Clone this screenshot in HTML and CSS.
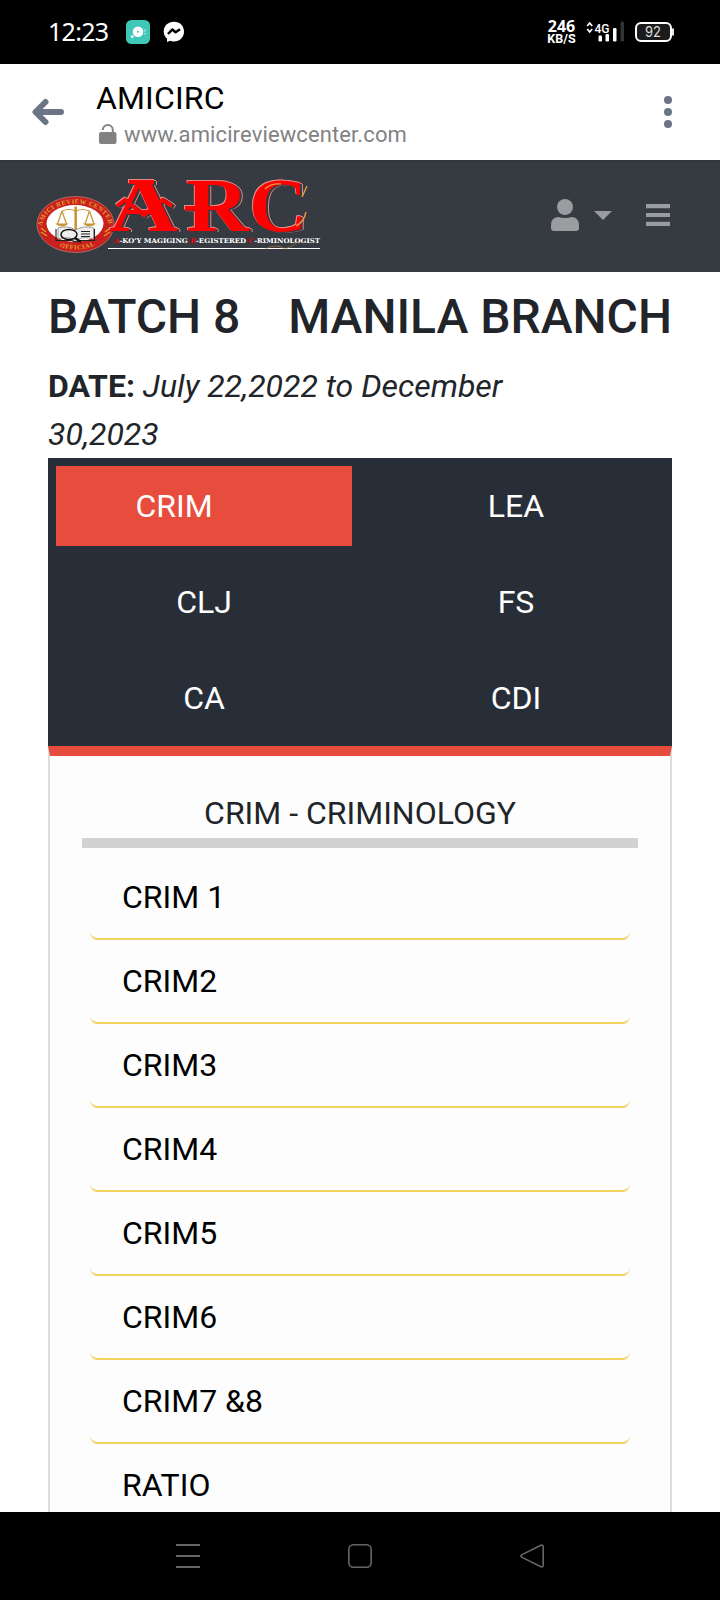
FILE: index.html
```html
<!DOCTYPE html>
<html lang="en">
<head>
<meta charset="utf-8">
<title>AMICIRC</title>
<link rel="stylesheet" href="styles.css">
</head>
<body>
<div class="screen">
  <header class="status">
    <span class="clock">12:23</span>
    <svg class="app-icon" width="24" height="24" viewBox="0 0 24 24"><rect width="24" height="24" rx="5.5" fill="#3fc8b8"/><circle cx="12" cy="11.7" r="5.3" fill="#fff"/><circle cx="12" cy="11.7" r="1" fill="#3fc8b8"/><circle cx="6.3" cy="16.7" r="1.4" fill="#fff"/><path d="M19 9.5v2M19 13v1.5" stroke="#b5ebe3" stroke-width="1.4"/></svg>
    <svg class="messenger" width="22" height="22" viewBox="0 0 22 22"><path d="M11 .7C4.900.7.7 5 .7 10.500c0 3 1.300 5.400 3.300 7.100V21l3-1.200c1.200.4 2.600.6 4 .6 6 0 10-4.300 10-9.900S17 .7 11 .7z" fill="#fff"/><path d="M5 13l4.300-4.500 3.300 2.800L17 8.300" fill="none" stroke="#000" stroke-width="2.500" stroke-linejoin="round"/></svg>
    <span class="speed"><b>246</b><small>KB/S</small></span>
    <svg class="signal" width="40" height="22" viewBox="0 0 40 22"><path d="M1.200 5l2.500-3 2.500 3M1.200 8l2.500 3 2.500-3" fill="none" stroke="#fff" stroke-width="1.700"/><text class="net" x="8.500" y="11.500" textLength="15" lengthAdjust="spacingAndGlyphs">4G</text><rect x="12.500" y="14.500" width="3.500" height="6" rx="1.200" fill="#fff"/><rect x="19.500" y="13" width="3.500" height="7.500" rx="1.200" fill="#fff"/><rect x="27" y="7" width="3.500" height="13.500" rx="1.200" fill="#fff"/><rect x="34.500" y=".5" width="3.500" height="20" rx="1.200" fill="#333"/></svg>
    <svg class="battery" width="40" height="20" viewBox="0 0 40 20"><rect x="1" y="1" width="35" height="18" rx="5" fill="#1b1b1b" stroke="#fff" stroke-width="2"/><path d="M38 6.500v7" stroke="#fff" stroke-width="1.800"/><text class="level" x="10" y="15" textLength="16" lengthAdjust="spacingAndGlyphs">92</text></svg>
  </header>

  <div class="browser-bar">
    <svg class="back" width="32" height="28" viewBox="0 0 32 28"><path d="M29 14H4M13.500 4L3.500 14l10 10" fill="none" stroke="#6c7488" stroke-width="6" stroke-linecap="round" stroke-linejoin="round"/></svg>
    <div class="site">
      <div class="site-title">AMICIRC</div>
      <div class="site-url"><svg class="lock" width="18" height="20" viewBox="0 0 18 20"><rect y="8" width="17.500" height="12" rx="2" fill="#828282"/><path d="M3.800 6a5 5 0 0 1 10 0V9" fill="none" stroke="#828282" stroke-width="2"/></svg><span class="url-text">www.amicireviewcenter.com</span></div>
    </div>
    <svg class="more" width="8" height="32" viewBox="0 0 8 32"><g fill="#6c7488"><circle cx="4" cy="4" r="4"/><circle cx="4" cy="16" r="4"/><circle cx="4" cy="28" r="4"/></g></svg>
  </div>

  <nav class="navbar">
    <svg class="logo" width="290" height="80" viewBox="0 0 290 80">
      <defs><path id="arc-top" d="M7 54a33 22.500 0 1 1 65 0"/><path id="arc-bottom" d="M13 65a36 26 0 0 0 53 0"/></defs>
      <ellipse cx="39.500" cy="48.500" rx="38.500" ry="28" fill="#c9201d" stroke="#b77" stroke-width=".8"/>
      <ellipse cx="39" cy="47.500" rx="28.500" ry="18.500" fill="#fff"/>
      <text class="seal"><textPath href="#arc-top" startOffset="4" textLength="86">AMICI REVIEW CENTER</textPath></text>
      <text class="seal"><textPath href="#arc-bottom" startOffset="12" textLength="36">OFFICIAL</textPath></text>
      <path d="M5 52l5 4M5 56l6 4M74 52l-5 4M74 56l-6 4" stroke="#d99b28" stroke-width="1.500"/>
      <g fill="none" stroke="#c89335" stroke-width="1.200"><path d="M26 35q7-3 13.500 0 7-3 14 0M26 35l-4.500 13M26 35l4.500 13M53.500 35L49 48M53.500 35L58 48"/><path d="M39.700 30.500v24" stroke-width="2.500"/><path d="M21 48h10q-5 4-10 0zM48.500 48h10q-5 4-10 0z" fill="#c89335"/></g>
      <path d="M22 52q10-3 17.500 2 8-5 18-2v11q-10-3-18 1-8-4-17.500-1z" fill="#eee" stroke="#888" stroke-width=".8"/>
      <path d="M20 53v11.500h16q4 2.500 8 0h14.500V53M45 55.500h9M45 58h9M45 60.500h9" fill="none" stroke="#222" stroke-width="1.100"/>
      <ellipse cx="33" cy="58.500" rx="8" ry="5" fill="none" stroke="#111" stroke-width="1.500"/><path d="M39 62l6 4" stroke="#111" stroke-width="2.200"/>
      <g class="letters">
        <path d="M81 30l8-6 19 15 19-15 9 6" fill="none" stroke="#f00" stroke-width="4"/>
        <path d="M93 4h25v4H93zM149 30h14v4.500h-14z" stroke="none"/>
        <text x="73" y="55" textLength="69" lengthAdjust="spacingAndGlyphs">A</text><text x="150" y="55" textLength="63" lengthAdjust="spacingAndGlyphs">R</text><text x="213" y="55" textLength="58" lengthAdjust="spacingAndGlyphs">C</text>
      </g>
      <path d="M266 21l5-11M270 36q-2 10-10 14M229 13q6-6 16-5" fill="none" stroke="#e59b3e" stroke-width="1.400"/>
      <text class="motto" x="78" y="67" textLength="206" lengthAdjust="spacingAndGlyphs"><tspan class="red">A</tspan>-KO'Y MAGIGING <tspan class="red">R</tspan>-EGISTERED <tspan class="red">C</tspan>-RIMINOLOGIST</text>
      <path d="M72 72.500h212" stroke="#fff" stroke-width="1.200"/><path d="M229 73q12-6 20 0 11-4 14-9" fill="none" stroke="#b58a44" stroke-width=".6"/>
    </svg>
    <svg class="user" width="28" height="32" viewBox="0 0 28 32"><circle cx="14" cy="8" r="8" fill="#9a9d9f"/><path d="M7.500 18q6.500 2.200 13 0 7.500 0 7.500 8.500V29q0 3-3 3H3q-3 0-3-3v-2.500Q0 18 7.500 18z" fill="#9a9d9f"/></svg>
    <svg class="caret" width="18" height="9" viewBox="0 0 18 9"><path d="M0 0h18L9 9z" fill="#9a9d9f"/></svg>
    <svg class="burger" width="24" height="22" viewBox="0 0 24 22"><path d="M0 2.200h24M0 11h24M0 19.800h24" stroke="#9a9d9f" stroke-width="4.200"/></svg>
  </nav>

  <main class="content">
    <div class="headline"><h1>BATCH 8</h1><h1>MANILA BRANCH</h1></div>
    <p class="date"><b>DATE:</b> <i>July 22,2022 to December<br>30,2023</i></p>
    <div class="tabs">
      <a class="tab tab-active">CRIM</a><a class="tab">LEA</a>
      <a class="tab">CLJ</a><a class="tab">FS</a>
      <a class="tab">CA</a><a class="tab">CDI</a>
    </div>
    <section class="panel">
      <h2>CRIM - CRIMINOLOGY</h2>
      <ul class="list">
        <li>CRIM 1</li><li>CRIM2</li><li>CRIM3</li><li>CRIM4</li><li>CRIM5</li><li>CRIM6</li><li>CRIM7 &amp;8</li><li>RATIO</li>
      </ul>
    </section>
  </main>

  <footer class="sysnav">
    <svg width="24" height="24" viewBox="0 0 24 24"><path d="M0 1h24M0 12h24M0 23h24" stroke="#666" stroke-width="1.800"/></svg>
    <svg width="24" height="24" viewBox="0 0 24 24"><rect x=".8" y=".8" width="22.400" height="22.400" rx="4.500" fill="none" stroke="#666" stroke-width="1.600"/></svg>
    <svg width="24" height="24" viewBox="0 0 24 24"><path d="M21 1.300L1.600 10.800q-1.400 1.200 0 2.400L21 22.700q2.200.6 2.200-1.500V2.800q0-2.100-2.200-1.500z" fill="none" stroke="#666" stroke-width="1.600"/></svg>
  </footer>
</div>
</body>
</html>
```
FILE: styles.css
```css
* { box-sizing: border-box; }
body { margin: 0; background: #fff; font-family: Roboto, "Liberation Sans", sans-serif; font-size: 32px; line-height: 48px; color: #212529; }
svg { display: block; flex: none; }
h1, h2, p, ul { margin: 0; padding: 0; }
.screen { width: 720px; height: 1600px; display: flex; flex-direction: column; overflow: hidden; }

.status { flex: none; height: 64px; background: #000; color: #fff; display: flex; align-items: center; padding: 0 45px 0 48px; }
.clock { width: 78px; font: 400 25px/30px "Noto Sans", sans-serif; letter-spacing: -0.700px; margin-top: -2px; }
.messenger { margin-left: 13px; }
.speed { margin-left: auto; width: 29px; display: flex; flex-direction: column; align-items: center; white-space: nowrap; }
.speed b { font: 700 16px/13px "Noto Sans", sans-serif; }
.speed small { font: 700 12.500px/12px Roboto, sans-serif; }
.signal { margin-left: 10px; }
.net { font: 500 13px Roboto, sans-serif; fill: #fff; }
.battery { margin-left: 9px; }
.level { font: 400 14px Inter, sans-serif; fill: #ddd; }

.browser-bar { flex: none; height: 96px; background: #fff; display: flex; align-items: center; padding: 0 48px 0 32px; }
.site { margin-left: 32px; flex: 1; color: #000; padding-top: 7px; }
.site-title { line-height: 38px; letter-spacing: 0.150px; }
.site-url { display: flex; align-items: center; height: 35px; color: #828282; font-size: 22px; }
.lock { margin: -2px 7px 0 3px; }
.url-text { letter-spacing: 0.120px; }

.navbar { flex: none; height: 112px; background: #363a41; border-top: 2px solid #333638; display: flex; align-items: center; padding: 0 50px 0 36px; }
.logo { margin-top: -2px; }
.user { margin-left: auto; margin-top: -4px; }
.caret { margin-left: 15px; margin-top: -4px; }
.burger { margin-left: 34px; margin-top: -4px; }
.letters { font: 700 76px "Liberation Serif", serif; fill: #f00; filter: drop-shadow(2.500px 1px 0 #363a41) drop-shadow(1px 0.500px 0 #e08a8a) drop-shadow(-0.500px -0.500px 0 #e08a8a); }
.seal { font: 700 6.500px "Liberation Serif", serif; fill: #e0a030; }
.motto { font: 700 6.500px "DejaVu Serif", serif; fill: #fff; }
.red { fill: #e00; }

.content { flex: 1; min-height: 0; overflow: hidden; padding: 16px 48px 0; }
.headline { display: flex; justify-content: space-between; white-space: nowrap; }
.headline h1 { font-size: 48px; font-weight: 500; line-height: 58px; }
.date { margin-top: 16px; }
.tabs { display: grid; grid-template-columns: 1fr 1fr; gap: 16px; padding: 8px; background: #282e38; color: #fff; text-align: center; }
.tab { height: 80px; padding-top: 16px; }
.tab-active { background: #e74c3c; padding-right: 60px; }
.panel { border: 2px solid #dcdcdc; border-top: 10px solid #e74c3c; border-bottom: 0; background: #fdfdfd; padding: 32px; height: 900px; }
.panel h2 { font-size: 32px; font-weight: 400; line-height: 50px; text-align: center; border-bottom: 10px solid #d2d2d2; }
.list { list-style: none; padding: 8px 8px 0; color: #000; }
.list li { height: 84px; padding: 17px 32px 0; border-bottom: 2px solid #f1d157; border-radius: 8px; }

.sysnav { flex: none; height: 88px; background: #000; display: flex; justify-content: space-between; align-items: center; padding: 0 176px; }
```
